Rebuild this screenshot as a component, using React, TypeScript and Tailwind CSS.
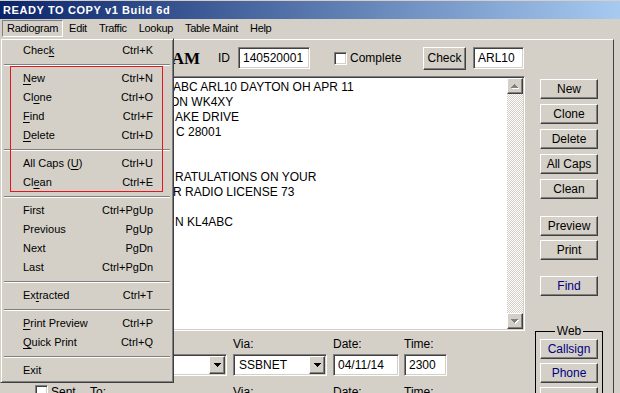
import type { ReactNode } from 'react';

const sunken =
  'border border-t-[#808080] border-l-[#808080] border-r-white border-b-white shadow-[inset_1px_1px_0_#404040,inset_-1px_-1px_0_#d4d0c8]';
const raised =
  'border border-t-white border-l-white border-r-[#404040] border-b-[#404040] shadow-[inset_-1px_-1px_0_#808080]';

type Item = { pre: string; u?: string; post?: string; keys?: string } | 'sep';

const menuItems: Item[] = [
  { pre: 'Chec', u: 'k', keys: 'Ctrl+K' },
  'sep',
  { pre: '', u: 'N', post: 'ew', keys: 'Ctrl+N' },
  { pre: 'Cl', u: 'o', post: 'ne', keys: 'Ctrl+O' },
  { pre: '', u: 'F', post: 'ind', keys: 'Ctrl+F' },
  { pre: '', u: 'D', post: 'elete', keys: 'Ctrl+D' },
  'sep',
  { pre: 'All Caps (', u: 'U', post: ')', keys: 'Ctrl+U' },
  { pre: 'Cl', u: 'e', post: 'an', keys: 'Ctrl+E' },
  'sep',
  { pre: 'First', keys: 'Ctrl+PgUp' },
  { pre: 'Previous', keys: 'PgUp' },
  { pre: 'Next', keys: 'PgDn' },
  { pre: 'Last', keys: 'Ctrl+PgDn' },
  'sep',
  { pre: 'Ex', u: 't', post: 'racted', keys: 'Ctrl+T' },
  'sep',
  { pre: '', u: 'P', post: 'rint Preview', keys: 'Ctrl+P' },
  { pre: '', u: 'Q', post: 'uick Print', keys: 'Ctrl+Q' },
  'sep',
  { pre: 'Exit' },
];

// message body, only the part right of the open menu shows
const bodyLines: [string, number][] = [
  ['ABC ARL10 DAYTON OH APR 11', 143],
  ['ON WK4XY', 140],
  ['AKE DRIVE', 145],
  ['C 28001', 146],
  ['', 0],
  ['', 0],
  ['RATULATIONS ON YOUR', 145],
  ['R RADIO LICENSE 73', 143],
  ['', 0],
  ['N KL4ABC', 145],
];

function DownArrow() {
  return (
    <svg width="7" height="4" viewBox="0 0 7 4">
      <path d="M0 0H7V1H6V2H5V3H4V4H3V3H2V2H1V1H0Z" fill="#000" />
    </svg>
  );
}

function GrayArrow({ down }: { down?: boolean }) {
  const d = down
    ? 'M0 0H7V1H6V2H5V3H4V4H3V3H2V2H1V1H0Z'
    : 'M3 0H4V1H5V2H6V3H7V4H0V3H1V2H2V1H3Z';
  return (
    <svg width="8" height="5" viewBox="0 0 8 5">
      <path d={d} fill="#fff" transform="translate(1 1)" />
      <path d={d} fill="#808080" />
    </svg>
  );
}

function Btn({ children, className = '', blue }: { children?: ReactNode; className?: string; blue?: boolean }) {
  return (
    <div
      className={`w-[58px] h-[20px] shrink-0 flex items-center justify-center text-[12px] bg-[#d4d0c8] ${raised} ${
        blue ? 'text-[#000080]' : 'text-black'
      } ${className}`}
    >
      {children}
    </div>
  );
}

function CheckBox() {
  return <div className={`w-[13px] h-[13px] shrink-0 bg-white ${sunken}`} />;
}

function Combo({ value }: { value?: string }) {
  return (
    <div className={`h-[22px] flex items-center bg-white p-[1px] ${sunken}`}>
      <span className="flex-1 pl-[4px] text-[12px] truncate">{value}</span>
      <div className={`w-[16px] h-full flex items-center justify-center bg-[#d4d0c8] ${raised}`}>
        <DownArrow />
      </div>
    </div>
  );
}

function TextBox({ value, className = '' }: { value?: string; className?: string }) {
  return (
    <div className={`h-[22px] flex items-center bg-white pl-[4px] text-[12px] ${sunken} ${className}`}>{value}</div>
  );
}

function Field({ label, w, ml, children }: { label: string; w: string; ml: string; children: ReactNode }) {
  return (
    <div className={`${w} ${ml} shrink-0`}>
      <div className="h-[15px] leading-[15px] text-[12px]">{label}</div>
      <div className="mt-[2px]">{children}</div>
    </div>
  );
}

function FieldRow({ check, who, via, date, time, className }: {
  check: string;
  who: string;
  via?: string;
  date?: string;
  time?: string;
  className: string;
}) {
  return (
    <div className={`flex items-start ${className}`}>
      <div className="w-[62px] pl-[7px] flex items-start gap-[3px] text-[12px] leading-[15px] shrink-0">
        <CheckBox />
        <span>{check}</span>
      </div>
      <Field label={who} w="w-[137px]" ml="ml-0">
        <Combo />
      </Field>
      <Field label="Via:" w="w-[94px]" ml="ml-[6px]">
        <Combo value={via} />
      </Field>
      <Field label="Date:" w="w-[66px]" ml="ml-[6px]">
        <TextBox value={date} />
      </Field>
      <Field label="Time:" w="w-[43px]" ml="ml-[5px]">
        <TextBox value={time} className="pl-[2px]" />
      </Field>
    </div>
  );
}

function MenuBar() {
  const items = ['Radiogram', 'Edit', 'Traffic', 'Lookup', 'Table Maint', 'Help'];
  return (
    <div className="h-[20px] pt-px pl-[2px] flex text-[11px] tracking-[-0.3px]">
      {items.map((m, i) => (
        <div
          key={m}
          className={`h-[17px] flex items-center border ${
            i === 0
              ? 'px-[4px] border-t-[#808080] border-l-[#808080] border-r-white border-b-white'
              : 'px-[5px] border-transparent'
          }`}
        >
          {m}
        </div>
      ))}
    </div>
  );
}

function RadiogramMenu() {
  return (
    <div className="absolute left-0 top-[38px] w-[174px] p-[2px] bg-[#d4d0c8] border border-t-[#d4d0c8] border-l-[#d4d0c8] border-r-[#404040] border-b-[#404040] shadow-[inset_1px_1px_0_#fff,inset_-1px_-1px_0_#808080] text-[11px]">
      {menuItems.map((it, i) =>
        it === 'sep' ? (
          <div key={i} className="h-[9px] pt-[4px] px-px">
            <div className="h-[2px] border-t border-t-[#808080] border-b border-b-white" />
          </div>
        ) : (
          <div key={i} className="h-[19px] flex items-center justify-between pl-[20px] pr-[18px]">
            <span>
              {it.pre}
              {it.u && <span className="underline underline-offset-[2px]">{it.u}</span>}
              {it.post}
            </span>
            <span>{it.keys}</span>
          </div>
        ),
      )}
      {/* highlight box drawn over the edit group */}
      <div className="absolute left-[9px] top-[27px] w-[153px] h-[126px] border border-[#e8141c] pointer-events-none" />
    </div>
  );
}

function Form() {
  return (
    <div className="w-[614px] h-[354px] flex border-t border-t-white border-r border-r-[#404040]">
      <div className="w-[525px] pl-[28px] shrink-0">
        <div className="mt-[7px] h-[22px] flex items-center text-[12px]">
          <div className="w-[172px] text-right font-['Liberation_Serif',serif] font-bold text-[17px] leading-none">
            RADIOGRAM
          </div>
          <span className="ml-[18px]">ID</span>
          <TextBox value="140520001" className="ml-[8px] w-[72px] pl-[3px]" />
          <div className="ml-[24px] w-[89px] flex items-center gap-[3px]">
            <CheckBox />
            <span>Complete</span>
          </div>
          <div className={`w-[43px] h-[23px] flex items-center justify-center ${raised}`}>Check</div>
          <TextBox value="ARL10" className="ml-[7px] w-[51px]" />
        </div>

        <div className={`mt-[7px] h-[255px] flex bg-white p-px ${sunken}`}>
          <div className="flex-1 pt-[2px] text-[12px] leading-[15px] whitespace-pre">
            {bodyLines.map(([t, pl], i) => (
              <div key={i} className="h-[15px]" style={{ paddingLeft: pl }}>
                {t}
              </div>
            ))}
          </div>
          <div className="w-[16px] flex flex-col bg-[repeating-conic-gradient(#fff_0_25%,#d4d0c8_0_50%)] bg-[length:2px_2px]">
            <div className={`h-[16px] flex items-center justify-center bg-[#d4d0c8] ${raised}`}>
              <GrayArrow />
            </div>
            <div className="flex-1" />
            <div className={`h-[16px] flex items-center justify-center bg-[#d4d0c8] ${raised}`}>
              <GrayArrow down />
            </div>
          </div>
        </div>

        <FieldRow check="Rcvd" who="From:" via="SSBNET" date="04/11/14" time="2300" className="mt-[6px]" />
        <FieldRow check="Sent" who="To:" className="mt-[9px]" />
      </div>

      <div className="ml-[10px] w-[68px] flex flex-col items-center shrink-0">
        <Btn className="mt-[39px]">New</Btn>
        <Btn className="mt-[5px]">Clone</Btn>
        <Btn className="mt-[5px]">Delete</Btn>
        <Btn className="mt-[5px]">All Caps</Btn>
        <Btn className="mt-[5px]">Clean</Btn>
        <Btn className="mt-[17px]">Preview</Btn>
        <Btn className="mt-[4px]">Print</Btn>
        <Btn className="mt-[16px]" blue>
          Find
        </Btn>
        <fieldset className="mt-[28px] w-[68px] border border-black px-[4px] flex flex-col gap-[4px]">
          <legend className="mx-auto px-[2px] text-[12px] leading-[15px]">Web</legend>
          <Btn blue>Callsign</Btn>
          <Btn blue>Phone</Btn>
          <Btn blue />
        </fieldset>
      </div>
    </div>
  );
}

export default function App() {
  return (
    <div className="relative w-[620px] h-[393px] overflow-hidden bg-[#d4d0c8] text-black font-['Liberation_Sans',Arial,sans-serif]">
      <div className="mt-px h-[18px] flex items-center pl-[3px] bg-[linear-gradient(to_right,#0a246a,#a6caf0)] text-white text-[11px] font-bold tracking-[0.6px]">
        READY TO COPY v1 Build 6d
      </div>
      <MenuBar />
      <Form />
      <RadiogramMenu />
    </div>
  );
}
